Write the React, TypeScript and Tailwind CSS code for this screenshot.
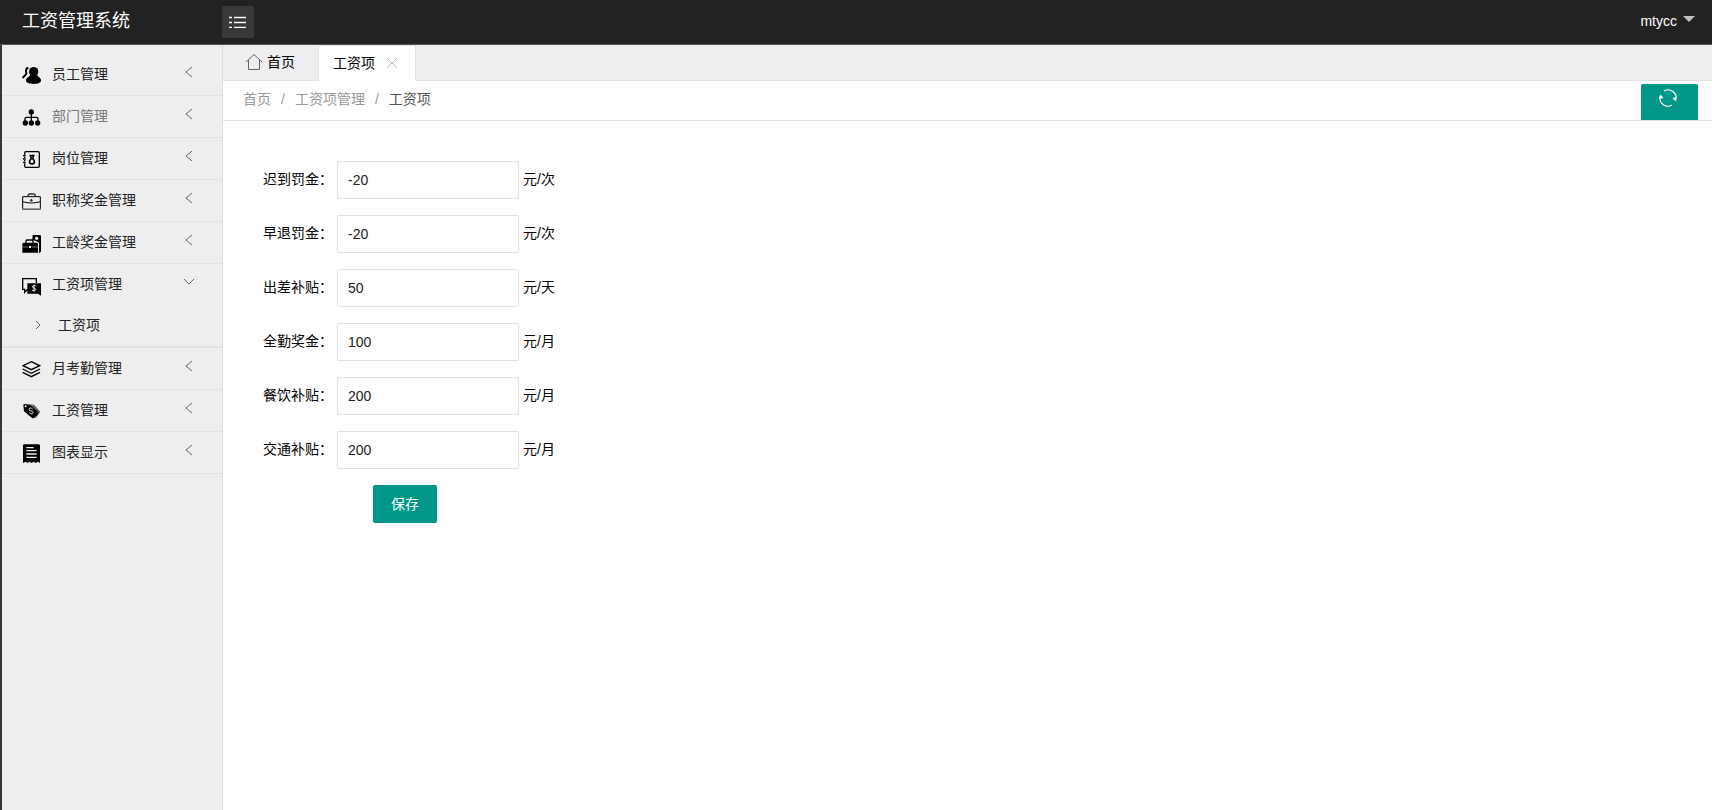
import React, { useState } from "react";

type IconProps = { children: React.ReactNode };

const MenuIcon = ({ children }: IconProps) => (
  <svg
    viewBox="0 0 57 57"
    className="h-[19px] w-[19px]"
    fill="none"
    stroke="#000"
    strokeWidth="4"
    aria-hidden="true"
  >
    {children}
  </svg>
);

const StaffIcon = () => (
  <MenuIcon>
    <ellipse cx="35" cy="17" rx="14" ry="14" fill="#000" stroke="none" />
    <path
      d="M25 24h20c0 8 12 10 12 19 0 8-9 11-22 11S12 51 12 43c0-9 13-11 13-19z"
      fill="#000"
      stroke="none"
    />
    <path d="M19 5c-7 2-8 9-6 17 1 6-10 7-10 15" strokeWidth="6" />
  </MenuIcon>
);

const DepartmentIcon = () => (
  <MenuIcon>
    <path d="M28 12v30M9 44V32q0-4 4-4h31q4 0 4 4v12" />
    <g fill="#000" stroke="none">
      <circle cx="28" cy="12" r="8" />
      <circle cx="10" cy="45" r="8" />
      <circle cx="28" cy="45" r="8" />
      <circle cx="47" cy="45" r="8" />
    </g>
  </MenuIcon>
);

const PostIcon = () => (
  <MenuIcon>
    <path d="M8 9q0-4 4-4h36q4 0 4 4v39q0 4-4 4H12q-4 0-4-4" />
    <path d="M8 9v5M8 20v4M8 30v4M8 40v8M3 17h8M3 27h8M3 37h8" />
    <path d="M25 17h10l-3 9c7 6 8 16-2 16s-9-10-2-16z" strokeWidth="5" />
  </MenuIcon>
);

const TitleIcon = () => (
  <MenuIcon>
    <path d="M2 14h53v38H2z" strokeWidth="3" />
    <path d="M18 13q0-7 5-7h12q5 0 5 7" strokeWidth="4" stroke="#333" />
    <path d="M2 29q13 4 26 4t27-4" strokeWidth="3" />
    <path d="M28 20l5 5-5 5-5-5z" fill="#333" stroke="none" />
    <path d="M1 51h55" stroke="#888" />
  </MenuIcon>
);

const SeniorityIcon = () => (
  <MenuIcon>
    <path d="M32 3h21q4 0 4 4v45q0 4-6 4V26L40 20l-9-2z" fill="#000" stroke="none" />
    <circle cx="44" cy="13" r="5" fill="#eee" stroke="none" />
    <path d="M1 30q0-4 4-4h39q4 0 4 4v26H1z" fill="#000" stroke="none" />
    <path d="M12 27v-6q0-3 3-3h15q3 0 3 3v6" />
    <path d="M1 39h18M29 39h19" stroke="#aaa" strokeWidth="2" />
    <path d="M21 36h6v6h-6z" fill="#eee" stroke="none" />
  </MenuIcon>
);

const SalaryItemIcon = () => (
  <MenuIcon>
    <path d="M43 18V5H2v32h6v9l9-9h3" />
    <path d="M16 19h41v37l-9-6H16z" fill="#000" stroke="none" />
    <path d="M41 27c-5-3-11-1-10 3s10 2 10 7-7 5-11 2M36 23v21" stroke="#eee" strokeWidth="3" />
  </MenuIcon>
);

const AttendanceIcon = () => (
  <MenuIcon>
    <path d="M28 5l25 12-25 12L3 17z" />
    <path d="M2 27l26 13 26-13M2 37l26 13 26-13" />
  </MenuIcon>
);

const SalaryIcon = () => (
  <MenuIcon>
    <path d="M26 7l11 2 18 20-13 19-5 1 10-17z" fill="#666" stroke="none" />
    <path d="M4 9q0-3 3-3l19 2 22 22q2 3 0 6L36 48q-3 2-6 0L6 28z" fill="#000" stroke="none" />
    <circle cx="11" cy="13" r="3" fill="#eee" stroke="none" />
    <path d="M32 21c-5-5-11-3-11 2s11 2 12 8-6 6-11 1" stroke="#eee" strokeWidth="3" />
  </MenuIcon>
);

const ChartIcon = () => (
  <MenuIcon>
    <path d="M3 4q0-3 4-3h42q5 0 5 4v52l-7-4-6 4-6-4-6 4-6-4-6 4-6-4-8 4z" fill="#000" stroke="none" />
    <path d="M13 11h22M13 20h31M13 30h31M13 40h31" stroke="#eee" strokeWidth="4" />
  </MenuIcon>
);

const Chevron = ({ path }: { path: string }) => (
  <svg
    viewBox="0 0 12 12"
    className="h-3 w-3"
    fill="none"
    stroke="#666"
    aria-hidden="true"
  >
    <path d={path} />
  </svg>
);

const menu = [
  { name: "员工管理", icon: StaffIcon },
  { name: "部门管理", icon: DepartmentIcon, muted: true },
  { name: "岗位管理", icon: PostIcon },
  { name: "职称奖金管理", icon: TitleIcon },
  { name: "工龄奖金管理", icon: SeniorityIcon },
  { name: "工资项管理", icon: SalaryItemIcon, children: ["工资项"] },
  { name: "月考勤管理", icon: AttendanceIcon },
  { name: "工资管理", icon: SalaryIcon },
  { name: "图表显示", icon: ChartIcon },
];

const fields = [
  { id: "late", label: "迟到罚金：", value: "-20", unit: "元/次" },
  { id: "early", label: "早退罚金：", value: "-20", unit: "元/次" },
  { id: "trip", label: "出差补贴：", value: "50", unit: "元/天" },
  { id: "full", label: "全勤奖金：", value: "100", unit: "元/月" },
  { id: "meal", label: "餐饮补贴：", value: "200", unit: "元/月" },
  { id: "traffic", label: "交通补贴：", value: "200", unit: "元/月" },
];

const Header = () => (
  <header className="flex h-[45px] items-start border-b border-[#555] bg-[#222] text-white">
    <h1 className="w-[222px] pl-[22px] text-lg leading-[42px]">工资管理系统</h1>
    <button
      type="button"
      aria-label="菜单"
      className="mt-1.5 flex h-8 w-8 items-center justify-center rounded-xs bg-[#393939]"
    >
      <svg viewBox="0 0 18 12" className="h-3 w-[18px]" stroke="#fff" strokeWidth="1.300" aria-hidden="true">
        <path d="M0 1.500h3M5 1.500h12M0 6.500h3M5 6.500h12M0 11.300h3M5 11.300h12" />
      </svg>
    </button>
    <button type="button" className="mr-[17px] ml-auto flex h-[42px] items-center gap-1.5 text-sm">
      mtycc
      <svg viewBox="0 0 12 6" className="mb-1 h-1.5 w-3" aria-hidden="true">
        <path d="M0 0h12L6 6z" fill="#c2c2c2" />
      </svg>
    </button>
  </header>
);

const Sidebar = () => (
  <nav className="w-[223px] shrink-0 border-r border-l-2 border-r-[#ddd] border-l-[#33373c] bg-[#eee] pt-[9px]">
    <ul>
      {menu.map(({ name, icon: Icon, muted, children }) => (
        <li
          key={name}
          className={children ? "border-b-2 border-[#e2e2e2]" : "border-b border-[#e2e2e2]"}
        >
          <a
            href="#"
            className={`flex items-center pr-[27px] pb-0.5 pl-5 ${
              children ? "h-[42px]" : "h-[41px]"
            } ${muted ? "text-[#777]" : "text-[#222]"}`}
          >
            <span className="pt-1">
              <Icon />
            </span>
            <span className="ml-[11px] flex-1">{name}</span>
            <span className="pb-1">
              <Chevron path={children ? "M1 3l5 5 5-5" : "M9 1L3 6l6 5"} />
            </span>
          </a>
          {children?.map((child) => (
            <a key={child} href="#" className="flex h-10 items-center pb-0.5 pl-[30px] text-[#222]">
              <Chevron path="M4 2l4 4-4 4" />
              <span className="ml-3.5">{child}</span>
            </a>
          ))}
        </li>
      ))}
    </ul>
  </nav>
);

const Tabs = () => (
  <div className="flex h-9 border-b border-[#e2e2e2] bg-[#eeeef0]">
    <button type="button" className="flex w-[95px] items-center pb-0.5 pl-[22px]">
      <svg
        viewBox="0 0 18 18"
        className="mr-1 h-[18px] w-[18px]"
        fill="none"
        stroke="#666"
        aria-hidden="true"
      >
        <path d="M1 9l8-7.500L17 9M3.500 7v9.500h11V7" />
      </svg>
      首页
    </button>
    <div className="-mb-px flex w-[98px] items-center border-x border-t border-[#e2e2e2] bg-white pb-0.5 pl-3.5">
      <span>工资项</span>
      <button type="button" aria-label="关闭" className="ml-3">
        <svg viewBox="0 0 10 10" className="h-2.5 w-2.5" stroke="#bbb" aria-hidden="true">
          <path d="M0 0l10 10M10 0L0 10" />
        </svg>
      </button>
    </div>
  </div>
);

const Breadcrumb = () => (
  <div className="flex h-10 items-center border-b border-[#e2e2e2] pr-3.5 pl-5 leading-[37px] text-[#999]">
    <div className="flex self-start">
      <a href="#">首页</a>
      <span className="mx-2.5">/</span>
      <a href="#">工资项管理</a>
      <span className="mx-2.5">/</span>
      <span className="text-[#555]">工资项</span>
    </div>
    <button
      type="button"
      aria-label="刷新"
      className="ml-auto flex h-9 w-[57px] justify-center self-end rounded-t-xs bg-[#009688] pt-[5px]"
    >
      <svg
        viewBox="0 0 18 18"
        className="mr-1 h-[18px] w-[18px]"
        fill="none"
        stroke="#fff"
        strokeWidth="1.200"
        aria-hidden="true"
      >
        <path d="M5 2A8 8 0 0 1 16.800 11M13 16A8 8 0 0 1 1.200 7" />
        <path d="M13.500 9l3 3.500L18 8zM0 10L1.500 5.500 4.500 9z" fill="#fff" stroke="none" />
      </svg>
    </button>
  </div>
);

const SalaryForm = () => {
  const [values, setValues] = useState(fields.map((field) => field.value));

  return (
    <form className="px-10 pt-10" onSubmit={(e) => e.preventDefault()}>
      {fields.map(({ id, label, unit }, index) => (
        <div key={id} className="mb-4 flex h-[38px] text-black">
          <label htmlFor={id} className="w-[74px] leading-9">
            {label}
          </label>
          <input
            id={id}
            value={values[index]}
            onChange={(e) =>
              setValues(values.map((v, i) => (i === index ? e.target.value : v)))
            }
            className="w-[182px] rounded-xs border border-[#e2e2e2] px-2.5 text-[#222] outline-none"
          />
          <span className="ml-1 leading-9">{unit}</span>
        </div>
      ))}
      <button
        type="submit"
        className="ml-[110px] h-[38px] w-16 rounded-xs bg-[#009688] text-white"
      >
        保存
      </button>
    </form>
  );
};

const App = () => {
  return (
    <div className="flex min-h-screen flex-col bg-white font-['Liberation_Sans','Noto_Sans_CJK_SC',sans-serif] text-sm">
      <Header />
      <div className="flex flex-1">
        <Sidebar />
        <main className="min-w-0 flex-1 text-black">
          <Tabs />
          <Breadcrumb />
          <SalaryForm />
        </main>
      </div>
    </div>
  );
};

export default App;
